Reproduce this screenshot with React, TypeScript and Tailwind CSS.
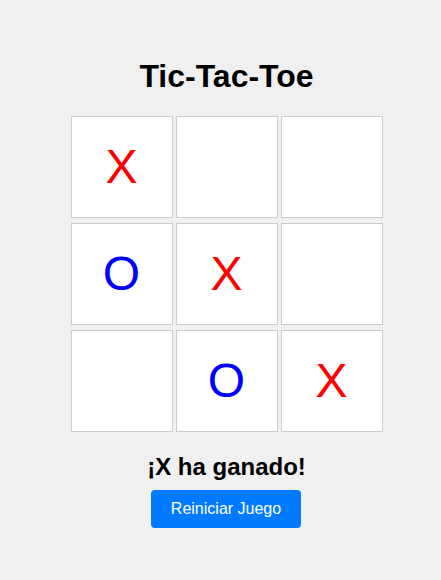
import React from "react";

const board = ["X", "", "", "O", "X", "", "", "O", "X"];

export default function App() {
  const rows = [0, 1, 2];
  return (
    <div
      className="min-h-[580px] w-full bg-[#f0f0f0] flex flex-col items-center pl-[12px] pt-[58px]"
      style={{ fontFamily: '"Liberation Sans", Arial, sans-serif' }}
    >
      <h1 className="text-[32px] font-bold leading-[37px] text-black mb-[21px]">Tic-Tac-Toe</h1>
      <div className="flex flex-col gap-[5px]">
        {rows.map((r) => (
          <div key={r} className="flex gap-[3px]">
            {[0, 1, 2].map((c) => {
              const v = board[r * 3 + c];
              return (
                <div
                  key={c}
                  className={`w-[102px] h-[102px] bg-white border border-[#cccccc] flex items-center justify-center text-[48px] leading-none ${
                    v === "X" ? "text-[#ff0000]" : "text-[#0000ff]"
                  }`}
                >
                  {v}
                </div>
              );
            })}
          </div>
        ))}
      </div>
      <div className="mt-[21px] text-[24px] font-bold leading-[28px] text-black">¡X ha ganado!</div>
      <button className="mt-[9px] ml-[-1px] w-[150px] h-[38px] bg-[#007bff] text-white text-[16px] rounded-[4px]">
        Reiniciar Juego
      </button>
    </div>
  );
}
